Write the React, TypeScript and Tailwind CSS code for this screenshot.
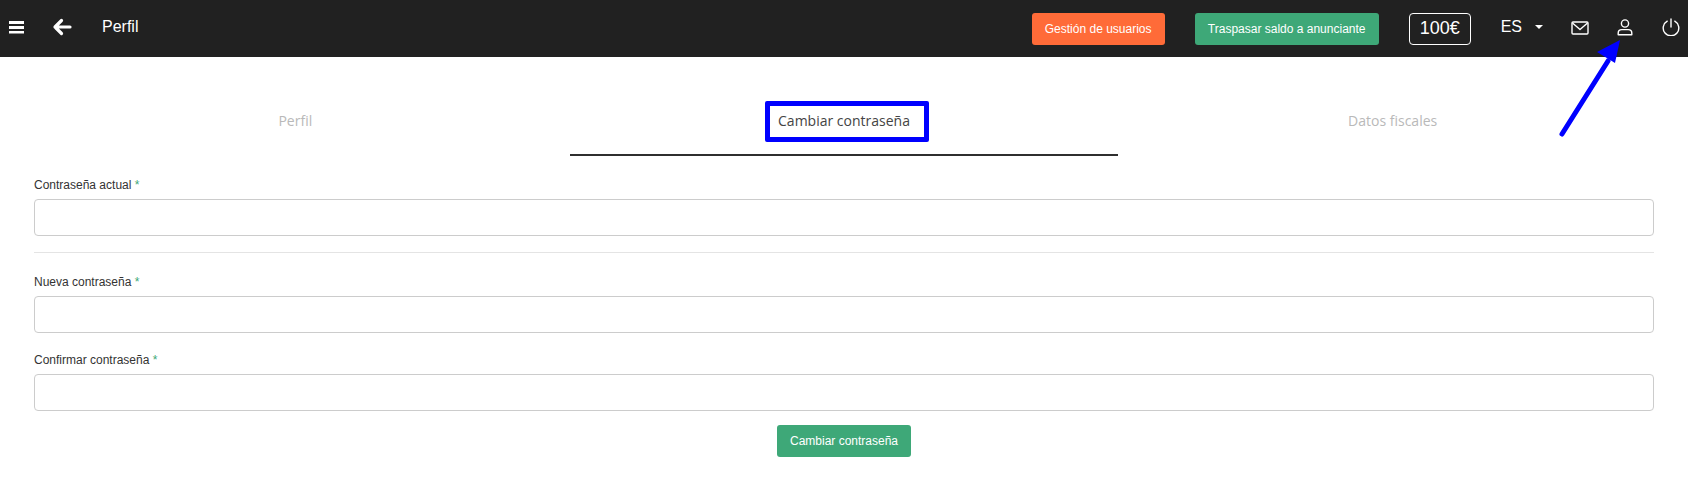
const Field = ({ label }: { label: string }) => (
  <div>
    <label className="block text-[12px] leading-[14px] text-[#333]">
      {label} <span className="text-[#3ea878]">*</span>
    </label>
    <input
      type="password"
      className="mt-[7px] block h-[37px] w-full rounded-[4px] border border-[#ccc] bg-white"
    />
  </div>
);

const App = () => {
  return (
    <div className="relative h-[479px] overflow-hidden bg-white font-['Liberation_Sans',Arial,sans-serif]">
      <header className="flex h-[57px] items-center bg-[#212121] text-white">
        <svg width="15" height="14" viewBox="0 0 15 14" className="ml-[9px] mb-[3px]" fill="#fff">
          <rect x="0" y="1" width="15" height="3" />
          <rect x="0" y="6" width="15" height="3" />
          <rect x="0" y="11" width="15" height="2.5" />
        </svg>
        <svg width="20" height="18" viewBox="0 0 20 18" className="ml-[28px] mb-[3px]" fill="none" stroke="#fff" strokeWidth="3.2" strokeLinecap="round" strokeLinejoin="round">
          <path d="M18 9H3M9.5 2.5 3 9l6.5 6.5" />
        </svg>
        <span className="ml-[30px] mb-[4px] text-[16px]">Perfil</span>

        <div className="ml-auto flex items-center">
          <button className="h-[32px] w-[133px] rounded-[3px] bg-[#ff6b38] text-[12px] text-white">
            Gestión de usuarios
          </button>
          <button className="ml-[30px] h-[32px] w-[184px] rounded-[3px] bg-[#3ea878] text-[12px] text-white">
            Traspasar saldo a anunciante
          </button>
          <div className="ml-[30px] flex h-[32px] w-[62px] items-center justify-center rounded-[4px] border border-white text-[18px]">
            100€
          </div>
          <span className="ml-[30px] mb-[3px] text-[16px]">ES</span>
          <span className="ml-[13px] mb-[3px] h-0 w-0 border-x-[4px] border-t-[4px] border-x-transparent border-t-white" />
          <svg width="18" height="14" viewBox="0 0 18 14" className="ml-[28px] mb-[2px]" fill="none" stroke="#fff" strokeWidth="1.4" strokeLinejoin="round">
            <rect x="1" y="1" width="16" height="12" rx="1" />
            <path d="M1.5 2 9 8.5 16.5 2" />
          </svg>
          <svg width="16" height="17" viewBox="0 0 16 17" className="ml-[28px] mb-[3px]" fill="none" stroke="#fff" strokeWidth="1.4">
            <circle cx="8" cy="4.5" r="3.6" />
            <path d="M1.2 15.8v-1.8c0-2 1.6-3.4 3.6-3.4h6.4c2 0 3.6 1.4 3.6 3.4v1.8z" strokeLinejoin="round" />
          </svg>
          <svg width="18" height="18" viewBox="0 0 18 18" className="ml-[29px] mr-[8px] mb-[3px]" fill="none" stroke="#fff" strokeWidth="1.4" strokeLinecap="round">
            <path d="M5.2 3.2a7.8 7.8 0 1 0 7.6 0" />
            <path d="M9 1v8" />
          </svg>
        </div>
      </header>

      <main className="px-[34px]">
        <div className="-mx-[13px] grid h-[99px] grid-cols-3 pt-[53px] font-['Open_Sans',sans-serif] text-[14px]">
          <div className="text-center font-medium text-[#b9b9b9]">Perfil</div>
          <div className="border-b-2 border-[#2f2f2f] text-center text-[#444]">Cambiar contraseña</div>
          <div className="text-center font-medium text-[#b9b9b9]">Datos fiscales</div>
        </div>

        <div className="mt-[22px]">
          <Field label="Contraseña actual" />
        </div>
        <hr className="mt-[16px] border-[#e4e4e4]" />
        <div className="mt-[22px]">
          <Field label="Nueva contraseña" />
        </div>
        <div className="mt-[20px]">
          <Field label="Confirmar contraseña" />
        </div>
        <div className="mt-[14px] flex justify-center">
          <button className="h-[32px] w-[134px] rounded-[3px] bg-[#3ea878] text-[12px] text-white">
            Cambiar contraseña
          </button>
        </div>
      </main>

      {/* annotations drawn over the screenshot */}
      <div className="absolute left-[765px] top-[101px] h-[41px] w-[164px] rounded-[2px] border-[5px] border-[#0000ff]" />
      <svg className="absolute left-[1550px] top-[35px]" width="80" height="105" viewBox="0 0 80 105" fill="#0000ff">
        <path d="M12 99 58 26" stroke="#0000ff" strokeWidth="5" strokeLinecap="round" />
        <path d="M70 5 65 28 47 17z" />
      </svg>
    </div>
  );
};

export default App;
